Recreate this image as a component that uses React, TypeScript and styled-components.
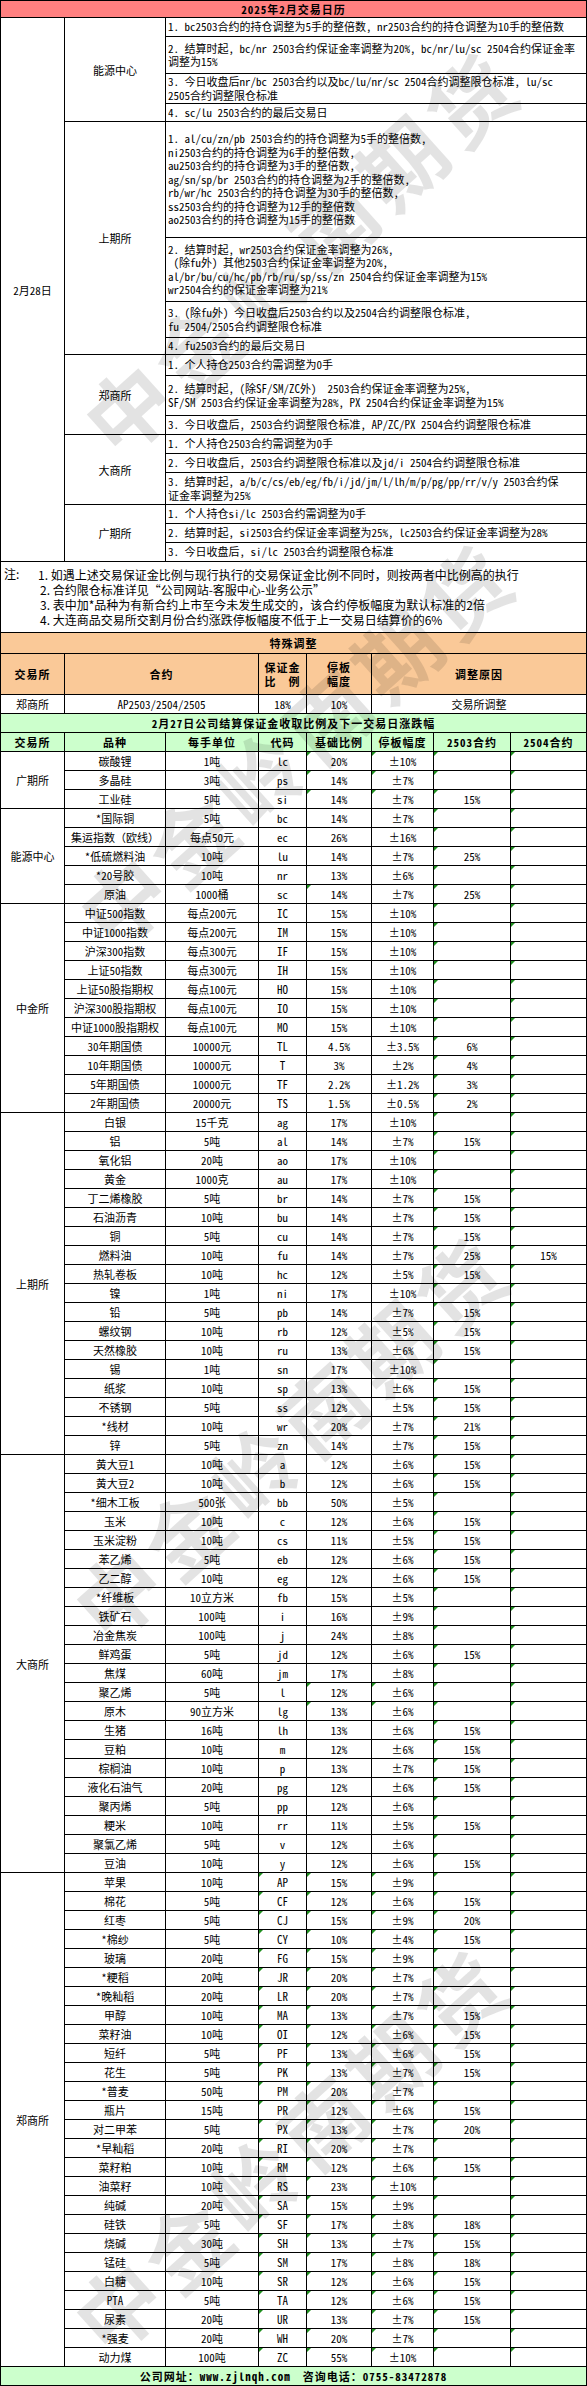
import React from 'react';
import styled, { createGlobalStyle } from 'styled-components';

const GlobalStyle = createGlobalStyle`
  html, body {
    margin: 0;
    padding: 0;
    background: #fff;
  }
`;

const SONG = `"Noto Sans Mono CJK SC", "Noto Sans CJK SC", monospace`;
const HEI = `"Noto Sans CJK SC", sans-serif`;

const RED = '#ff8080';
const ORANGE = '#fac998';
const GREEN = '#ccffcc';

const Sheet = styled.div`
  position: relative;
  box-sizing: border-box;
  width: 587px;
  padding: 1px;
  display: grid;
  grid-template-columns: 63px 100px 92px 47px 64px 61px 76px 75px;
  gap: 1px;
  background: #000;
  font-family: ${SONG};
  font-size: 11px;
  color: #000;
  overflow: hidden;
`;

const Banner = styled.div<{ $bg: string; $h?: number }>`
  grid-column: span 8;
  height: ${p => p.$h ?? 18}px;
  background: ${p => p.$bg};
  display: flex;
  align-items: center;
  justify-content: center;
  font-weight: 700;
  letter-spacing: 1px;
  white-space: nowrap;
`;

const DateCell = styled.div<{ $rows: number }>`
  grid-row: span ${p => p.$rows};
  background: #fff;
  display: flex;
  align-items: center;
  justify-content: center;
`;

const ExchangeCell = styled.div<{ $rows: number }>`
  grid-row: span ${p => p.$rows};
  background: #fff;
  display: flex;
  align-items: center;
  justify-content: center;
  white-space: nowrap;
`;

const NoticeCell = styled.div<{ $h: number }>`
  grid-column: span 6;
  height: ${p => p.$h}px;
  background: #fff;
  padding: 0 2px;
  display: flex;
  flex-direction: column;
  justify-content: center;
  line-height: 13.5px;
`;

const Line = styled.div`
  white-space: pre;
`;

const NoteCell = styled.div`
  grid-column: span 8;
  height: 70px;
  background: #fff;
  display: flex;
  align-items: center;
  padding: 0 3px;
  font-family: ${HEI};
  font-size: 12px;
  line-height: 15px;
`;

const NoteLabel = styled.div`
  align-self: flex-start;
  margin-top: 4px;
  width: 34px;
  flex: none;
`;

const NoteList = styled.div`
  display: flex;
  flex-direction: column;
  white-space: nowrap;
  & > div:not(:first-child) {
    padding-left: 2px;
  }
`;

const HeadCell = styled.div<{ $bg: string; $span?: number; $h?: number }>`
  grid-column: span ${p => p.$span ?? 1};
  height: ${p => p.$h ?? 18}px;
  background: ${p => p.$bg};
  display: flex;
  flex-direction: column;
  align-items: center;
  justify-content: center;
  font-weight: 700;
  letter-spacing: 1px;
  line-height: 14px;
  white-space: nowrap;
`;

const DataCell = styled.div<{ $span?: number; $flag?: boolean }>`
  position: relative;
  grid-column: span ${p => p.$span ?? 1};
  height: 18px;
  background: #fff;
  line-height: 18px;
  text-align: center;
  white-space: nowrap;
  &::before {
    content: '';
    display: ${p => (p.$flag ? 'block' : 'none')};
    position: absolute;
    top: 0;
    left: 0;
    border-top: 4px solid #1f8f1f;
    border-right: 4px solid transparent;
  }
`;

const Watermark = styled.div<{ $x: number; $y: number }>`
  position: absolute;
  left: ${p => p.$x}px;
  top: ${p => p.$y}px;
  transform: translate(-50%, -50%) rotate(-42deg);
  font-family: ${HEI};
  font-weight: 700;
  font-size: 84px;
  letter-spacing: 8px;
  color: rgba(0, 0, 0, 0.11);
  white-space: nowrap;
  pointer-events: none;
`;

type Notice = { h: number; lines: string[] };
type CalendarGroup = { exchange: string; items: Notice[] };

const calendar: CalendarGroup[] = [
  {
    exchange: '能源中心',
    items: [
      { h: 18, lines: ['1. bc2503合约的持仓调整为5手的整倍数, nr2503合约的持仓调整为10手的整倍数'] },
      { h: 36, lines: ['2. 结算时起, bc/nr 2503合约保证金率调整为20%, bc/nr/lu/sc 2504合约保证金率', '调整为15%'] },
      { h: 29, lines: ['3. 今日收盘后nr/bc 2503合约以及bc/lu/nr/sc 2504合约调整限仓标准, lu/sc', '2505合约调整限仓标准'] },
      { h: 17, lines: ['4. sc/lu 2503合约的最后交易日'] },
    ],
  },
  {
    exchange: '上期所',
    items: [
      {
        h: 115,
        lines: [
          '1. al/cu/zn/pb 2503合约的持仓调整为5手的整倍数,',
          'ni2503合约的持仓调整为6手的整倍数,',
          'au2503合约的持仓调整为3手的整倍数,',
          'ag/sn/sp/br 2503合约的持仓调整为2手的整倍数,',
          'rb/wr/hc 2503合约的持仓调整为30手的整倍数,',
          'ss2503合约的持仓调整为12手的整倍数',
          'ao2503合约的持仓调整为15手的整倍数',
        ],
      },
      {
        h: 63,
        lines: [
          '2. 结算时起, wr2503合约保证金率调整为26%,',
          ' (除fu外) 其他2503合约保证金率调整为20%,',
          'al/br/bu/cu/hc/pb/rb/ru/sp/ss/zn 2504合约保证金率调整为15%',
          'wr2504合约的保证金率调整为21%',
        ],
      },
      { h: 35, lines: ['3. (除fu外) 今日收盘后2503合约以及2504合约调整限仓标准,', 'fu 2504/2505合约调整限仓标准'] },
      { h: 16, lines: ['4. fu2503合约的最后交易日'] },
    ],
  },
  {
    exchange: '郑商所',
    items: [
      { h: 20, lines: ['1. 个人持仓2503合约需调整为0手'] },
      { h: 39, lines: ['2. 结算时起, (除SF/SM/ZC外)  2503合约保证金率调整为25%,', 'SF/SM 2503合约保证金率调整为28%, PX 2504合约保证金率调整为15%'] },
      { h: 18, lines: ['3. 今日收盘后, 2503合约调整限仓标准, AP/ZC/PX 2504合约调整限仓标准'] },
    ],
  },
  {
    exchange: '大商所',
    items: [
      { h: 18, lines: ['1. 个人持仓2503合约需调整为0手'] },
      { h: 18, lines: ['2. 今日收盘后, 2503合约调整限仓标准以及jd/i 2504合约调整限仓标准'] },
      { h: 31, lines: ['3. 结算时起, a/b/c/cs/eb/eg/fb/i/jd/jm/l/lh/m/p/pg/pp/rr/v/y 2503合约保', '证金率调整为25%'] },
    ],
  },
  {
    exchange: '广期所',
    items: [
      { h: 18, lines: ['1. 个人持仓si/lc 2503合约需调整为0手'] },
      { h: 18, lines: ['2. 结算时起, si2503合约保证金率调整为25%, lc2503合约保证金率调整为28%'] },
      { h: 18, lines: ['3. 今日收盘后, si/lc 2503合约调整限仓标准'] },
    ],
  },
];

const notes = [
  '1. 如遇上述交易保证金比例与现行执行的交易保证金比例不同时，则按两者中比例高的执行',
  '2. 合约限仓标准详见“公司网站-客服中心-业务公示”',
  '3. 表中加*品种为有新合约上市至今未发生成交的，该合约停板幅度为默认标准的2倍',
  '4. 大连商品交易所交割月份合约涨跌停板幅度不低于上一交易日结算价的6%',
];

// name, unit, code, base, limit, 2503, 2504, flags (C code, B base, L limit, 3 / 4 month columns)
type Product = [string, string, string, string, string, string, string, string?];
type MarginGroup = { exchange: string; flags: string; rows: Product[] };

const groups: MarginGroup[] = [
  {
    exchange: '广期所',
    flags: 'BL34',
    rows: [
      ['碳酸锂', '1吨', 'lc', '20%', '±10%', '', ''],
      ['多晶硅', '3吨', 'ps', '14%', '±7%', '', ''],
      ['工业硅', '5吨', 'si', '14%', '±7%', '15%', ''],
    ],
  },
  {
    exchange: '能源中心',
    flags: '34',
    rows: [
      ['*国际铜', '5吨', 'bc', '14%', '±7%', '', ''],
      ['集运指数（欧线）', '每点50元', 'ec', '26%', '±16%', '', ''],
      ['*低硫燃料油', '10吨', 'lu', '14%', '±7%', '25%', ''],
      ['*20号胶', '10吨', 'nr', '13%', '±6%', '', ''],
      ['原油', '1000桶', 'sc', '14%', '±7%', '25%', '', 'B34'],
    ],
  },
  {
    exchange: '中金所',
    flags: '34',
    rows: [
      ['中证500指数', '每点200元', 'IC', '15%', '±10%', '', ''],
      ['中证1000指数', '每点200元', 'IM', '15%', '±10%', '', ''],
      ['沪深300指数', '每点300元', 'IF', '15%', '±10%', '', ''],
      ['上证50指数', '每点300元', 'IH', '15%', '±10%', '', ''],
      ['上证50股指期权', '每点100元', 'HO', '15%', '±10%', '', ''],
      ['沪深300股指期权', '每点100元', 'IO', '15%', '±10%', '', ''],
      ['中证1000股指期权', '每点100元', 'MO', '15%', '±10%', '', ''],
      ['30年期国债', '10000元', 'TL', '4.5%', '±3.5%', '6%', ''],
      ['10年期国债', '10000元', 'T', '3%', '±2%', '4%', ''],
      ['5年期国债', '10000元', 'TF', '2.2%', '±1.2%', '3%', ''],
      ['2年期国债', '20000元', 'TS', '1.5%', '±0.5%', '2%', ''],
    ],
  },
  {
    exchange: '上期所',
    flags: '34',
    rows: [
      ['白银', '15千克', 'ag', '17%', '±10%', '', ''],
      ['铝', '5吨', 'al', '14%', '±7%', '15%', ''],
      ['氧化铝', '20吨', 'ao', '17%', '±10%', '', ''],
      ['黄金', '1000克', 'au', '17%', '±10%', '', ''],
      ['丁二烯橡胶', '5吨', 'br', '14%', '±7%', '15%', ''],
      ['石油沥青', '10吨', 'bu', '14%', '±7%', '15%', ''],
      ['铜', '5吨', 'cu', '14%', '±7%', '15%', ''],
      ['燃料油', '10吨', 'fu', '14%', '±7%', '25%', '15%'],
      ['热轧卷板', '10吨', 'hc', '12%', '±5%', '15%', ''],
      ['镍', '1吨', 'ni', '17%', '±10%', '', ''],
      ['铅', '5吨', 'pb', '14%', '±7%', '15%', ''],
      ['螺纹钢', '10吨', 'rb', '12%', '±5%', '15%', ''],
      ['天然橡胶', '10吨', 'ru', '13%', '±6%', '15%', ''],
      ['锡', '1吨', 'sn', '17%', '±10%', '', ''],
      ['纸浆', '10吨', 'sp', '13%', '±6%', '15%', ''],
      ['不锈钢', '5吨', 'ss', '12%', '±5%', '15%', ''],
      ['*线材', '10吨', 'wr', '20%', '±7%', '21%', ''],
      ['锌', '5吨', 'zn', '14%', '±7%', '15%', ''],
    ],
  },
  {
    exchange: '大商所',
    flags: '34',
    rows: [
      ['黄大豆1', '10吨', 'a', '12%', '±6%', '15%', ''],
      ['黄大豆2', '10吨', 'b', '12%', '±6%', '15%', ''],
      ['*细木工板', '500张', 'bb', '50%', '±5%', '', ''],
      ['玉米', '10吨', 'c', '12%', '±6%', '15%', ''],
      ['玉米淀粉', '10吨', 'cs', '11%', '±5%', '15%', ''],
      ['苯乙烯', '5吨', 'eb', '12%', '±6%', '15%', ''],
      ['乙二醇', '10吨', 'eg', '12%', '±6%', '15%', ''],
      ['*纤维板', '10立方米', 'fb', '15%', '±5%', '', ''],
      ['铁矿石', '100吨', 'i', '16%', '±9%', '', ''],
      ['冶金焦炭', '100吨', 'j', '24%', '±8%', '', ''],
      ['鲜鸡蛋', '5吨', 'jd', '12%', '±6%', '15%', ''],
      ['焦煤', '60吨', 'jm', '17%', '±8%', '', ''],
      ['聚乙烯', '5吨', 'l', '12%', '±6%', '', '', 'BL34'],
      ['原木', '90立方米', 'lg', '13%', '±6%', '', '', 'BL34'],
      ['生猪', '16吨', 'lh', '13%', '±6%', '15%', ''],
      ['豆粕', '10吨', 'm', '12%', '±6%', '15%', ''],
      ['棕榈油', '10吨', 'p', '13%', '±7%', '15%', ''],
      ['液化石油气', '20吨', 'pg', '12%', '±6%', '15%', ''],
      ['聚丙烯', '5吨', 'pp', '12%', '±6%', '', ''],
      ['粳米', '10吨', 'rr', '11%', '±5%', '15%', ''],
      ['聚氯乙烯', '5吨', 'v', '12%', '±6%', '', ''],
      ['豆油', '10吨', 'y', '12%', '±6%', '15%', ''],
    ],
  },
  {
    exchange: '郑商所',
    flags: 'CBL34',
    rows: [
      ['苹果', '10吨', 'AP', '15%', '±9%', '', ''],
      ['棉花', '5吨', 'CF', '12%', '±6%', '15%', ''],
      ['红枣', '5吨', 'CJ', '15%', '±9%', '20%', ''],
      ['*棉纱', '5吨', 'CY', '10%', '±4%', '15%', ''],
      ['玻璃', '20吨', 'FG', '15%', '±9%', '', ''],
      ['*粳稻', '20吨', 'JR', '20%', '±7%', '', ''],
      ['*晚籼稻', '20吨', 'LR', '20%', '±7%', '', ''],
      ['甲醇', '10吨', 'MA', '13%', '±7%', '15%', ''],
      ['菜籽油', '10吨', 'OI', '12%', '±6%', '15%', ''],
      ['短纤', '5吨', 'PF', '13%', '±6%', '15%', ''],
      ['花生', '5吨', 'PK', '13%', '±7%', '15%', ''],
      ['*普麦', '50吨', 'PM', '20%', '±7%', '', ''],
      ['瓶片', '15吨', 'PR', '12%', '±6%', '15%', ''],
      ['对二甲苯', '5吨', 'PX', '13%', '±7%', '20%', ''],
      ['*早籼稻', '20吨', 'RI', '20%', '±7%', '', ''],
      ['菜籽粕', '10吨', 'RM', '12%', '±6%', '15%', ''],
      ['油菜籽', '10吨', 'RS', '23%', '±10%', '', ''],
      ['纯碱', '20吨', 'SA', '15%', '±9%', '', ''],
      ['硅铁', '5吨', 'SF', '17%', '±8%', '18%', ''],
      ['烧碱', '30吨', 'SH', '13%', '±7%', '15%', ''],
      ['锰硅', '5吨', 'SM', '17%', '±8%', '18%', ''],
      ['白糖', '10吨', 'SR', '12%', '±6%', '15%', ''],
      ['PTA', '5吨', 'TA', '12%', '±6%', '15%', ''],
      ['尿素', '20吨', 'UR', '13%', '±7%', '15%', ''],
      ['*强麦', '20吨', 'WH', '20%', '±7%', '', ''],
      ['动力煤', '100吨', 'ZC', '55%', '±10%', '', ''],
    ],
  },
];

const columns = ['交易所', '品种', '每手单位', '代码', '基础比例', '停板幅度', '2503合约', '2504合约'];

const watermarks = [
  { x: 300, y: 250 },
  { x: 295, y: 742 },
  { x: 290, y: 1435 },
  { x: 290, y: 2148 },
];

function ProductRow({ row, flags }: { row: Product; flags: string }) {
  const [name, unit, code, base, limit, m03, m04, own] = row;
  const f = own ?? flags;
  return (
    <>
      <DataCell>{name}</DataCell>
      <DataCell>{unit}</DataCell>
      <DataCell $flag={f.includes('C')}>{code}</DataCell>
      <DataCell $flag={f.includes('B')}>{base}</DataCell>
      <DataCell $flag={f.includes('L')}>{limit}</DataCell>
      <DataCell $flag={f.includes('3')}>{m03}</DataCell>
      <DataCell $flag={f.includes('4')}>{m04}</DataCell>
    </>
  );
}

export default function App() {
  const noticeRows = calendar.reduce((n, g) => n + g.items.length, 0);
  return (
    <>
      <GlobalStyle />
      <Sheet>
        <Banner $bg={RED} $h={16}>2025年2月交易日历</Banner>
        <DateCell $rows={noticeRows}>2月28日</DateCell>
        {calendar.map(g => (
          <React.Fragment key={g.exchange}>
            <ExchangeCell $rows={g.items.length}>{g.exchange}</ExchangeCell>
            {g.items.map((it, i) => (
              <NoticeCell key={i} $h={it.h}>
                {it.lines.map((l, j) => (
                  <Line key={j}>{l}</Line>
                ))}
              </NoticeCell>
            ))}
          </React.Fragment>
        ))}

        <NoteCell>
          <NoteLabel>注:</NoteLabel>
          <NoteList>
            {notes.map(n => (
              <div key={n}>{n}</div>
            ))}
          </NoteList>
        </NoteCell>

        <Banner $bg={ORANGE} $h={20}>特殊调整</Banner>
        <HeadCell $bg={ORANGE} $h={40}>交易所</HeadCell>
        <HeadCell $bg={ORANGE} $h={40} $span={2}>合约</HeadCell>
        <HeadCell $bg={ORANGE} $h={40}>
          <span>保证金</span>
          <span>比　例</span>
        </HeadCell>
        <HeadCell $bg={ORANGE} $h={40}>
          <span>停板</span>
          <span>幅度</span>
        </HeadCell>
        <HeadCell $bg={ORANGE} $h={40} $span={3}>调整原因</HeadCell>
        <DataCell>郑商所</DataCell>
        <DataCell $span={2}>AP2503/2504/2505</DataCell>
        <DataCell>18%</DataCell>
        <DataCell>10%</DataCell>
        <DataCell $span={3}>交易所调整</DataCell>

        <Banner $bg={GREEN}>2月27日公司结算保证金收取比例及下一交易日涨跌幅</Banner>
        {columns.map(c => (
          <HeadCell key={c} $bg={GREEN}>{c}</HeadCell>
        ))}
        {groups.map(g => (
          <React.Fragment key={g.exchange}>
            <ExchangeCell $rows={g.rows.length}>{g.exchange}</ExchangeCell>
            {g.rows.map(r => (
              <ProductRow key={r[2]} row={r} flags={g.flags} />
            ))}
          </React.Fragment>
        ))}
        <Banner $bg={GREEN}>公司网址：www.zjlnqh.com　咨询电话：0755-83472878</Banner>

        {watermarks.map((w, i) => (
          <Watermark key={i} $x={w.x} $y={w.y}>中金岭南期货</Watermark>
        ))}
      </Sheet>
    </>
  );
}
